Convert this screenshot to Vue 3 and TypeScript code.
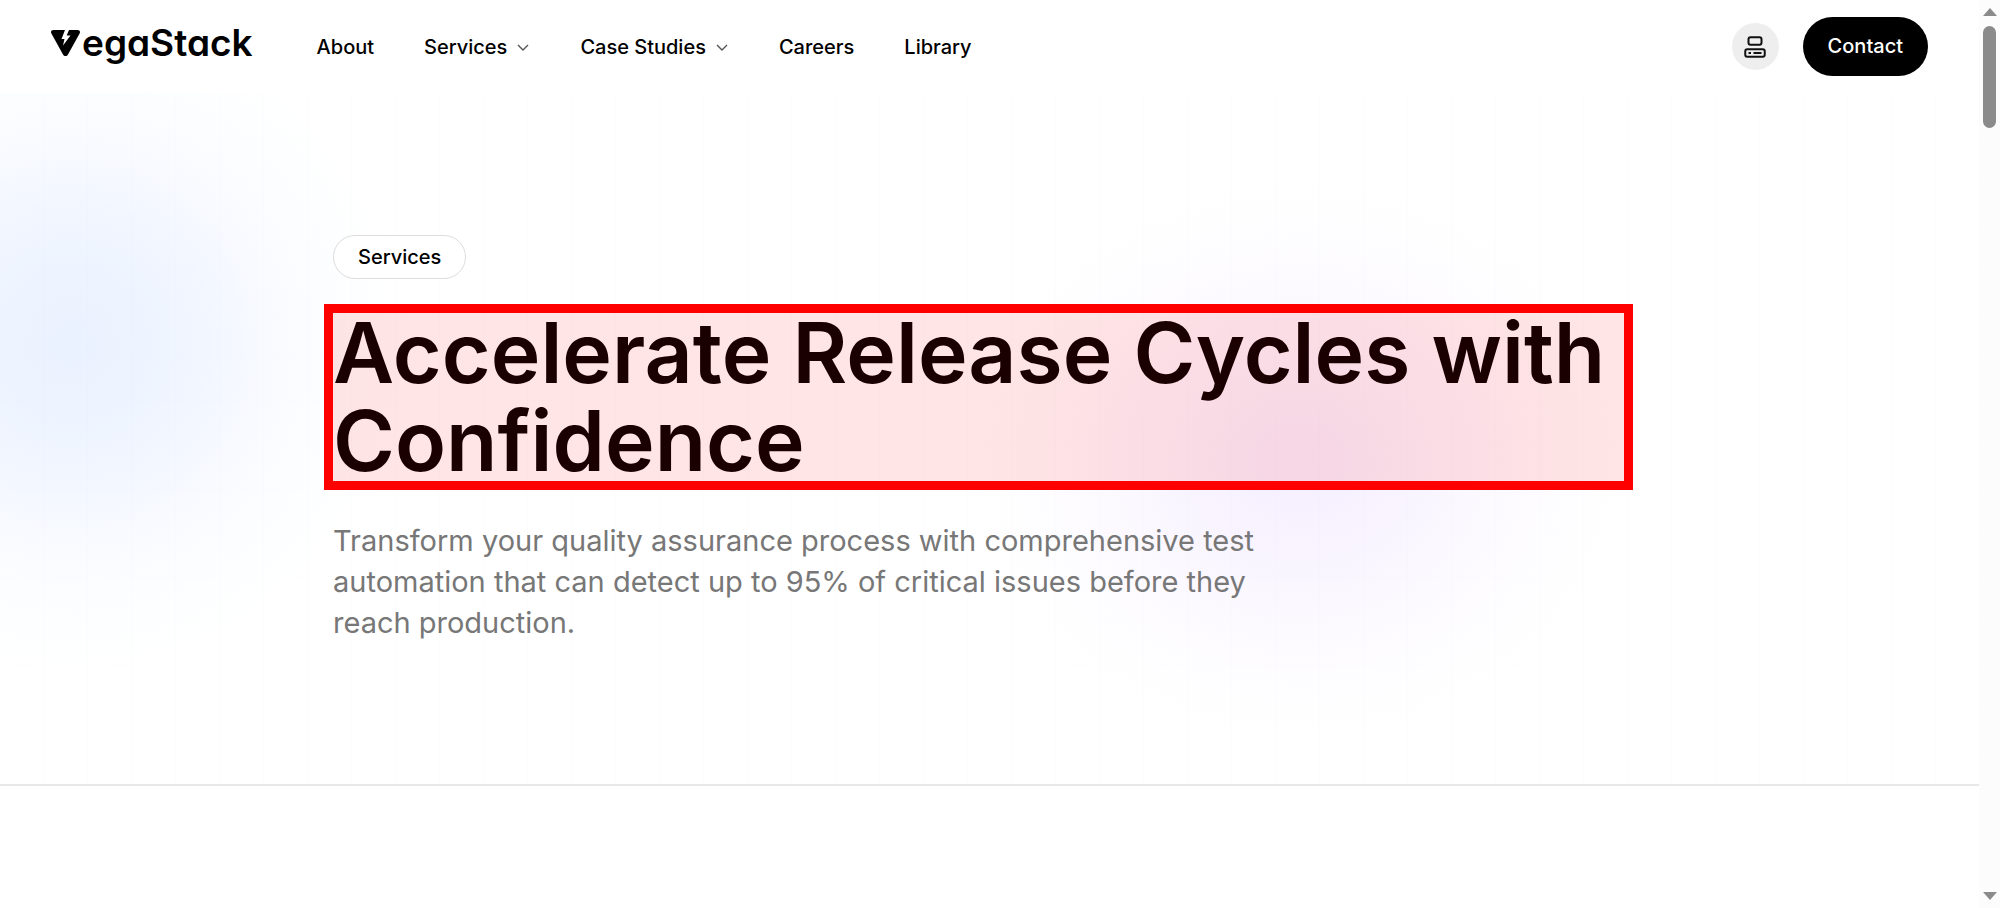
<script setup lang="ts">
interface NavItem {
  label: string
  menu: boolean
}

const navItems: NavItem[] = [
  { label: 'About', menu: false },
  { label: 'Services', menu: true },
  { label: 'Case Studies', menu: true },
  { label: 'Careers', menu: false },
  { label: 'Library', menu: false },
]
</script>

<template>
  <div class="window">
    <div class="page">
      <header class="header">
        <a class="logo" href="#" aria-label="VegaStack">
          <svg class="logo-mark" viewBox="0 0 29 26" aria-hidden="true">
            <path
              fill="#000"
              d="M2.5 0H14L10.5 9H13.5L12 15.5L19.5 5.5H15.7L18 0H26.5C28.7 0 29.6 1.8 28.6 3.6L17 24.4C15.8 26.5 13.2 26.5 12 24.4L0.4 3.6C-0.6 1.8 0.3 0 2.5 0Z"
            />
          </svg>
          <span class="logo-text">egaStack</span>
        </a>
        <nav class="nav" aria-label="Main">
          <template v-for="item in navItems" :key="item.label">
            <button v-if="item.menu" class="nav-item nav-menu" type="button">
              {{ item.label }}
              <svg class="chevron" viewBox="0 0 14 14" aria-hidden="true">
                <path d="M2 5L7 10L12 5" fill="none" stroke="#555" stroke-width="1.4" />
              </svg>
            </button>
            <a v-else class="nav-item" href="#">{{ item.label }}</a>
          </template>
        </nav>
        <div class="actions">
          <button class="portal" type="button" aria-label="Client portal">
            <svg viewBox="0 0 24 24" aria-hidden="true" fill="none" stroke="#111" stroke-width="2">
              <rect x="5.5" y="2.25" width="13" height="7.5" rx="2" />
              <rect x="2.25" y="14.25" width="19.5" height="7.5" rx="2" />
              <path d="M5.5 18H8M10.5 18H18.5" />
            </svg>
          </button>
          <a class="contact" href="#">Contact</a>
        </div>
      </header>
      <main class="hero">
        <div class="content">
          <a class="tag" href="#">Services</a>
          <h1 class="title">Accelerate Release Cycles with Confidence</h1>
          <p class="lead">
            Transform your quality assurance process with comprehensive test automation that can
            detect up to 95% of critical issues before they reach production.
          </p>
        </div>
      </main>
    </div>
    <div class="scrollbar" aria-hidden="true">
      <svg class="arrow" viewBox="0 0 14 8"><path d="M7 0L14 8H0Z" fill="#8b8b8b" /></svg>
      <div class="thumb"></div>
      <svg class="arrow arrow-down" viewBox="0 0 14 8"><path d="M0 0H14L7 8Z" fill="#8b8b8b" /></svg>
    </div>
  </div>
</template>

<style>
body {
  margin: 0;
  background: #fff;
}
</style>

<style scoped>
.window {
  display: flex;
  min-height: 100vh;
  font-family: Inter, "Liberation Sans", sans-serif;
  color: #000;
}

.page {
  flex: 1;
  min-width: 0;
}

.header {
  display: flex;
  align-items: center;
  box-sizing: border-box;
  height: 93px;
  padding: 0 51px;
}

.logo {
  display: flex;
  align-items: center;
  gap: 2px;
  padding-bottom: 8px;
  color: #000;
  text-decoration: none;
}

.logo-mark {
  width: 29px;
  height: 26px;
}

.logo-text {
  font-size: 37px;
  line-height: 40px;
  font-weight: 600;
  font-feature-settings: "cv11";
}

.nav {
  display: flex;
  align-items: center;
  gap: 50px;
  margin-left: 64px;
}

.nav-item {
  padding: 0;
  border: 0;
  background: none;
  color: #000;
  font: 500 20px/28px Inter, "Liberation Sans", sans-serif;
  text-decoration: none;
}

.nav-menu {
  display: flex;
  align-items: center;
  gap: 9px;
}

.chevron {
  width: 14px;
  height: 14px;
}

.actions {
  display: flex;
  align-items: center;
  gap: 24px;
  margin-left: auto;
}

.portal {
  display: grid;
  place-items: center;
  width: 47px;
  height: 47px;
  padding: 0;
  border: 0;
  border-radius: 50%;
  background: #eee;
}

.portal svg {
  width: 24px;
  height: 24px;
}

.contact {
  padding: 15px 25px;
  border-radius: 30px;
  background: #000;
  color: #fff;
  font-size: 20px;
  line-height: 29px;
  font-weight: 500;
  text-decoration: none;
}

.hero {
  padding: 142px 0 141px;
  border-bottom: 2px solid #e8e8e8;
  background:
    repeating-linear-gradient(90deg, transparent 0 43px, rgb(0 0 0 / 0.6%) 43px 44px),
    repeating-linear-gradient(transparent 0 43px, rgb(0 0 0 / 0.4%) 43px 44px),
    radial-gradient(circle 340px at 72px 250px, #eaf2ff, #f0f5ff 34%, #f9fbff 62%, #fdfeff 82%, transparent),
    radial-gradient(ellipse 340px 290px at 1300px 367px, #f5eeff, #f9f5ff 36%, #fdfbff 66%, #fefeff 86%, transparent);
}

.content {
  box-sizing: border-box;
  width: 1313px;
  max-width: calc(100% - 64px);
  margin: 0 auto;
  padding-right: 22px;
}

.tag {
  display: block;
  box-sizing: border-box;
  width: fit-content;
  padding: 7px 24px;
  border: 1px solid #ddd;
  border-radius: 22px;
  background: #fff;
  color: #000;
  font-size: 20px;
  line-height: 28px;
  font-weight: 500;
  text-decoration: none;
}

.title {
  margin: 30px -4px 0;
  padding: 0 4px;
  outline: 9px solid #f00;
  outline-offset: -4px;
  background: rgb(255 0 0 / 10%);
  color: #1a0000;
  font-size: 84px;
  line-height: 88px;
  font-weight: 600;
}

.lead {
  max-width: 960px;
  margin: 35px 0 0;
  color: #777;
  font-size: 29px;
  line-height: 41px;
}

.scrollbar {
  display: flex;
  flex-direction: column;
  align-items: center;
  box-sizing: border-box;
  width: 21px;
  height: 100vh;
  padding: 8px 0;
  background: #fcfcfc;
}

.arrow {
  width: 14px;
  height: 8px;
}

.arrow-down {
  margin-top: auto;
}

.thumb {
  width: 13px;
  height: 102px;
  margin-top: 10px;
  border-radius: 7px;
  background: #8b8b8b;
}
</style>
